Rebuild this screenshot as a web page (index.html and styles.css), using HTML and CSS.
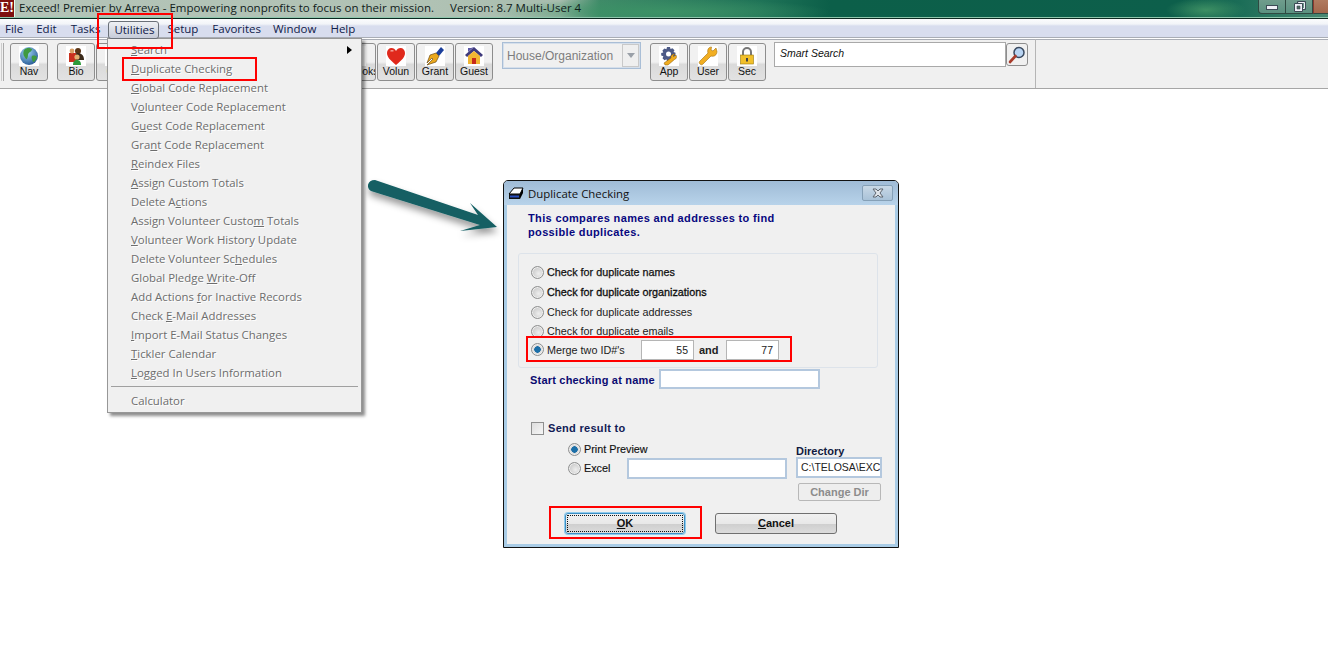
FILE: index.html
```html
<!DOCTYPE html>
<html lang="en">
<head>
<meta charset="utf-8">
<title>Exceed! Premier</title>
<link rel="stylesheet" href="styles.css">
</head>
<body>
<div class="app">
  <header class="titlebar">
    <span class="logo">E!</span>
    <span class="apptitle">Exceed! Premier by Arreva - Empowering nonprofits to focus on their mission.</span>
    <span class="appversion">Version: 8.7 Multi-User 4</span>
    <div class="winbtns">
      <span class="winbtn"><i class="min-glyph"></i></span>
      <span class="winbtn"><svg viewBox="0 0 13 12" width="13" height="12"><path d="M4.500 .5h8v8h-8z" fill="none" stroke="#3c4a55"/><path d="M5.500 1.500h6v6h-6z" fill="none" stroke="#eef0f6"/><path d="M1.500 2.500h8v8h-8z" fill="#eef0f6" stroke="#3c4a55"/><path d="M4 5h3v3H4z" fill="#4d6a60" stroke="#3c4a55" stroke-width=".6"/></svg></span>
      <span class="winbtn close"></span>
    </div>
  </header>
  <nav class="menubar">
    <span class="mi">File</span>
    <span class="mi m-edit">Edit</span>
    <span class="mi m-tasks">Tasks</span>
    <span class="mi active">Utilities</span>
    <span class="mi m-setup">Setup</span>
    <span class="mi m-fav">Favorites</span>
    <span class="mi m-win">Window</span>
    <span class="mi">Help</span>
  </nav>
  <div class="toolbar">
    <div class="tb-inner">
      <div class="grip"></div>
      <button class="tool nav"><svg viewBox="0 0 20 20" class="ic"><defs><radialGradient id="g1" cx=".4" cy=".3" r=".8"><stop offset="0" stop-color="#9fd6f5"/><stop offset="1" stop-color="#1d4f8e"/></radialGradient></defs><circle cx="10" cy="10" r="9" fill="url(#g1)"/><path d="M5 4c3-3 6-2 8-1 0 3-4 3-4 6 0 2-1 5-2 4-1-2-4-4-2-9zM13 10c2-1 4 0 5 1-1 4-3 5-4 5-1-2-2-5-1-6z" fill="#3f9a3f"/></svg><span>Nav</span></button>
      <button class="tool bio"><svg viewBox="0 0 20 20" class="ic"><circle cx="12" cy="5" r="3" fill="#5b3415"/><path d="M8 14c0-5 1-7 4-7s6 2 6 7z" fill="#3b2a1a"/><rect x="3" y="7" width="7" height="9" fill="#c9301e"/><circle cx="6" cy="5" r="2.400" fill="#d9a066"/><circle cx="11" cy="11" r="2.600" fill="#e2b070"/><path d="M7 19c0-4 2-5 4-5s4 1 4 5z" fill="#2d9a3a"/></svg><span>Bio</span></button>
      <button class="tool gift"><svg viewBox="0 0 20 20" class="ic"><rect x="2" y="4" width="16" height="14" fill="#c9a15b"/></svg><span class="gift-l">Gift</span></button>
      <button class="tool books"><svg viewBox="0 0 20 20" class="ic"><rect x="2" y="2" width="14" height="16" fill="#1f7a3a"/><rect x="5" y="5" width="8" height="2" fill="#dfe"/></svg><span>Books</span></button>
      <button class="tool"><svg viewBox="0 0 20 20" class="ic"><path d="M10 19C4 14 1 11 1 7c0-3 2-5 4.500-5C7.500 2 9 3 10 5c1-2 2.500-3 4.500-3C17 2 19 4 19 7c0 4-3 7-9 12z" fill="#e0291c"/><path d="M4 5c1-1.500 3-1.500 4 0-1 .5-3 1-4 0z" fill="#f8a79c"/></svg><span>Volun</span></button>
      <button class="tool"><svg viewBox="0 0 20 20" class="ic"><path d="M11 7l5-6 3 3-5 6z" fill="#1b3f9b"/><path d="M11 7l3 3-3 6-9 3 6-6-1-1-5 5 3-8z" fill="#e9a81f" stroke="#5a3b08" stroke-width=".6"/></svg><span>Grant</span></button>
      <button class="tool"><svg viewBox="0 0 20 20" class="ic"><path d="M10 1L1 9l2 2 7-6 7 6 2-2z" fill="#3f3a7c"/><path d="M4 10l6-5 6 5v8H4z" fill="#f2b632"/><rect x="8" y="12" width="4" height="6" fill="#c72a1a"/><path d="M10 1L4 6V2h3z" fill="#5b57a6"/></svg><span>Guest</span></button>
      <div class="combo"><span class="combo-text">House/Organization</span><span class="combo-btn"><i></i></span></div>
      <button class="tool"><svg viewBox="0 0 20 20" class="ic"><path d="M8 1h3l.5 2 2-.8 2 2-1 1.800 2 .7v3l-2 .5.800 2-2 2-2-1-.7 2H8l-.5-2-2 1-2-2 .9-2-2.200-.6V7l2.100-.6-.9-2 2-2 2 .9z" fill="#4d5a86"/><circle cx="9.500" cy="8" r="2.500" fill="#fff"/><path d="M17 9c1 2 .5 4-1.500 4.500L9 19H6l-1-2 7-5c-.5-2 1-4 4-4l-2 2 1 1z" fill="#f0ac1e" stroke="#8a5a05" stroke-width=".5"/></svg><span>App</span></button>
      <button class="tool"><svg viewBox="0 0 20 20" class="ic"><path d="M18 2l-3 3-2-1 .5-3C10.500 1 9 4 10 7l-8 8c-1 1-1 2 0 3s2 1 3 0l8-8c3 1 6-1 6-4.500z" fill="#f1ae22" stroke="#a4700c" stroke-width=".6"/></svg><span>User</span></button>
      <button class="tool"><svg viewBox="0 0 20 20" class="ic"><path d="M6 9V6a4 4 0 0 1 8 0v3" fill="none" stroke="#777" stroke-width="2"/><rect x="3.500" y="9" width="13" height="9" fill="#f1c02b" stroke="#9b7a10" stroke-width=".6"/><rect x="9" y="12" width="2" height="3.500" fill="#444"/></svg><span>Sec</span></button>
      <div class="smart"><span>Smart Search</span></div>
      <button class="smart-btn"><svg viewBox="0 0 20 20" width="20" height="20"><circle cx="12" cy="7.500" r="5" fill="#b9d4f2" stroke="#39495f" stroke-width="1.500"/><path d="M8.500 11L3 17" stroke="#a83b2a" stroke-width="2.600" stroke-linecap="round"/></svg></button>
    </div>
  </div>

  <main class="desktop">
    <svg class="arrow" viewBox="0 0 150 75" width="150" height="75">
      <defs><filter id="sh" x="-20%" y="-40%" width="140%" height="190%"><feDropShadow dx="1" dy="5" stdDeviation="3.500" flood-color="#000" flood-opacity=".4"/></filter></defs>
      <path d="M10 5L113 40 105 28 132 52 95 56 115 50 6 16C1 13 2 5 10 5Z" fill="#135f63" filter="url(#sh)"/>
    </svg>

    <section class="dialog">
      <div class="dlg-title">
        <svg class="dlg-icon" viewBox="0 0 16 14" width="16" height="14"><path d="M1 8l5-6h9l-3 6z" fill="#fff" stroke="#000"/><path d="M12 8l3-6v5l-3 6z" fill="#000"/><path d="M1 8h11v5H1z" fill="#111"/><path d="M2 9.500h9v2H2z" fill="#2a4fc0"/></svg>
        <span class="dlg-name">Duplicate Checking</span>
        <span class="dlg-x"><svg viewBox="0 0 12 10" width="12" height="10"><path d="M1 1h3l2 2 2-2h3L8 5l3 4H8L6 7 4 9H1l3-4z" fill="#dfe4ea" stroke="#5f6770" stroke-width="1"/></svg></span>
      </div>
      <div class="dlg-body">
        <p class="intro">This compares names and addresses to find<br>possible duplicates.</p>
        <div class="group">
          <label class="row r1"><i class="radio"></i><b class="heavy">Check for duplicate names</b></label>
          <label class="row r1"><i class="radio"></i><b class="heavier">Check for duplicate organizations</b></label>
          <label class="row r1"><i class="radio"></i><span>Check for duplicate addresses</span></label>
          <label class="row r2"><i class="radio"></i><span>Check for duplicate emails</span></label>
          <div class="row r3"><i class="radio on"></i><span class="merge">Merge two ID#'s</span><span class="field num w53">55</span><b class="and">and</b><span class="field num w53">77</span></div>
        </div>
        <div class="start"><b class="blue spaced">Start checking at name</b><span class="field blueb w161"></span></div>
        <div class="send"><i class="check"></i><b class="blue wide">Send result to</b></div>
        <div class="outrow">
          <div class="outleft">
            <div class="row pp"><i class="radio on"></i><span class="dark">Print Preview</span></div>
            <div class="row ex"><i class="radio"></i><span class="dark">Excel</span><span class="field blueb w160"></span></div>
          </div>
          <div class="outright">
            <b class="dirlabel">Directory</b>
            <span class="field blueb dir">C:\TELOSA\EXC</span>
            <button class="changedir">Chan<u>g</u>e Dir</button>
          </div>
        </div>
        <div class="actions">
          <button class="btn ok"><span class="dots"><u>O</u>K</span></button>
          <button class="btn"><span><u>C</u>ancel</span></button>
        </div>
      </div>
    </section>
  </main>

  <div class="menu">
    <div class="item"><u>S</u>earch<i class="sub"></i></div>
    <div class="item"><u>D</u>uplicate Checking</div>
    <div class="item"><u>G</u>lobal Code Replacement</div>
    <div class="item">V<u>o</u>lunteer Code Replacement</div>
    <div class="item">G<u>u</u>est Code Replacement</div>
    <div class="item">Gra<u>n</u>t Code Replacement</div>
    <div class="item"><u>R</u>eindex Files</div>
    <div class="item"><u>A</u>ssign Custom Totals</div>
    <div class="item">Delete A<u>c</u>tions</div>
    <div class="item">Assign Volunteer Custo<u>m</u> Totals</div>
    <div class="item"><u>V</u>olunteer Work History Update</div>
    <div class="item">Delete Volunteer Sc<u>h</u>edules</div>
    <div class="item">Global Pledge <u>W</u>rite-Off</div>
    <div class="item">Add Actions <u>f</u>or Inactive Records</div>
    <div class="item">Check <u>E</u>-Mail Addresses</div>
    <div class="item"><u>I</u>mport E-Mail Status Changes</div>
    <div class="item"><u>T</u>ickler Calendar</div>
    <div class="item"><u>L</u>ogged In Users Information</div>
    <div class="sep"></div>
    <div class="item">Calculator</div>
  </div>

  <div class="red red-util"></div>
  <div class="red red-dup"></div>
  <div class="red red-merge"></div>
  <div class="red red-ok"></div>
</div>
</body>
</html>
```
FILE: styles.css
```css
* { box-sizing: border-box; }
html, body { margin: 0; padding: 0; height: 100%; background: #fff; overflow: hidden; }
body { font-family: "Open Sans", "Noto Sans", sans-serif; }
.app { position: relative; width: 1328px; height: 660px; overflow: hidden; }

/* Title bar */
.titlebar {
  height: 19px; display: flex; align-items: flex-start; position: relative;
  border-bottom: 1px solid #0d2a22; box-shadow: inset 0 -1px 0 #8fc7ad;
  background:
    radial-gradient(ellipse 40px 12px at 1206px 10px, #3d8f63, transparent),
    radial-gradient(ellipse 170px 14px at 660px 12px, #3c9266, transparent),
    linear-gradient(90deg, #b4c4b8 0, #b0c2b4 430px, #a8bdae 560px, #3f8a68 600px, #1f7357 760px, #0c5f49 830px, #0d5f4b 1180px, #1b6d57 1240px, #4a8a74 1328px);
}
.logo {
  width: 15px; height: 17px; margin-top: 0; background: #7e1010; color: #fff; border-right: 1px solid #dfe;
  font: bold 14px/16px "Liberation Serif", serif; text-align: center; flex: none;
}
.apptitle, .appversion { font: 11.5px/15px "Open Sans", sans-serif; color: #10201a; white-space: nowrap; }
.apptitle { margin-left: 4px; }
.appversion { margin-left: 16px; }
.winbtns { position: absolute; right: 0; top: 0; height: 14px; display: flex; }
.winbtn {
  width: 28px; height: 14px; border: 1px solid #2f4a42; border-top: 0; display: flex; align-items: center; justify-content: center;
  background: linear-gradient(#6f9c8c, #5b9180);
}
.winbtn:first-child { border-radius: 0 0 0 4px; }
.winbtn + .winbtn { border-left: 0; margin-left: 0; width: 27px; }
.winbtn.close { width: 15px; background: linear-gradient(#b07a5f, #a3674c); border-right: 0; border-left: 1px solid #8a3a30; }
.min-glyph { width: 12px; height: 5px; background: #eef0f6; border: 1px solid #3c4a55; margin-top: 2px; }

/* Menu bar */
.menubar {
  height: 19px; display: flex; align-items: flex-start; padding: 2px 0 0 4px;
  background: linear-gradient(#fbfcfd 0, #f2f4f8 5px, #d8ddee 7px, #d8ddee 100%);
  border-bottom: 1px solid #a9adb5;
}
.mi { font: 11.5px/16px "Open Sans", sans-serif; color: #10204a; margin-right: 11px; padding: 0 1px; white-space: nowrap; }
.mi.m-edit { margin-right: 12px; }
.mi.m-tasks { margin-right: 7px; }
.mi.m-setup { margin-right: 12px; }
.mi.m-fav { margin-right: 10px; }
.mi.m-win { margin-right: 12px; }
.mi.active {
  border: 1px solid #6a7078; border-radius: 3px; padding: 0 5px; height: 18px; width: 51px; margin: 0 7px 0 0;
  background: linear-gradient(#eef0f4, #c6cbd8); position: relative; z-index: 2;
}

/* Toolbar */
.toolbar {
  height: 51px; background: #f0f0f0; border-top: 1px solid #fff; border-bottom: 1px solid #a6a6a6;
  box-shadow: inset 0 1px 0 #a9adb5;
}
.tb-inner { height: 49px; width: 1036px; border-right: 1px solid #b5b5b5; display: flex; align-items: flex-start; padding-top: 4px; position: relative; }
.grip { width: 3px; height: 38px; margin-left: 1px; border-left: 1px solid #ccc; border-right: 1px solid #aaa; margin-right: 6px; }
.tool {
  width: 38px; height: 38px; padding: 2px 0 0; margin: 0 1px 0 0; flex: none; border: 1px solid #8d8d8d; border-radius: 3px;
  background: linear-gradient(#f1f1f1 0, #f1f1f1 50%, #dadada 57%, #e2e2e2 100%);
  display: flex; flex-direction: column; align-items: center; justify-content: flex-start;
  font: 10.5px/12px "Liberation Sans", sans-serif; color: #111;
  overflow: hidden;
}
.tool span { margin-top: -1px; }
.ic { width: 20px; height: 20px; display: block; flex: none; background: #fff; }
.nav { margin-right: 9px; }
.gift { margin-right: 0; }
.gift-l { color: #c9821b; }
.books { margin-left: 208px; width: 34px; }
.books .ic { margin-right: 6px; }
.books span { margin-left: 10px; white-space: nowrap; }
.combo {
  width: 139px; height: 27px; margin: -1px 9px 0 8px; border: 1px solid #a9bed6; outline: 1px solid #d5dfeb; outline-offset: -2px;
  background: #f0f0f0; display: flex; align-items: center; justify-content: space-between; padding: 1px;
}
.combo-text { font: 12px/16px "Liberation Sans", sans-serif; color: #7d7d7d; padding-left: 3px; white-space: nowrap; }
.combo-btn { width: 17px; height: 23px; border: 1px solid #c9c9c9; display: flex; align-items: center; justify-content: center; background: #efefef; }
.combo-btn i { width: 0; height: 0; border: 4px solid transparent; border-top: 5px solid #9aa0a8; border-bottom: 0; }
.smart {
  width: 232px; height: 25px; margin: -1px 0 0 7px; border: 1px solid #a9a9a9; background: #fff; padding: 3px 5px;
  font: italic 10.5px/14px "Liberation Sans", sans-serif; color: #111;
}
.smart-btn { width: 22px; height: 23px; margin-top: 0; padding: 0; border: 1px solid #8d8d8d; border-radius: 3px; background: #f0f0f0; display: flex; align-items: center; justify-content: center; }

/* Desktop */
.desktop { position: relative; height: 571px; }
.arrow { position: absolute; left: 365px; top: 86px; }

/* Dialog */
.dialog {
  position: absolute; left: 503px; top: 91px; width: 396px; height: 368px;
  border: 1px solid #111; border-radius: 5px 5px 0 0; background: #f0f0f0; box-shadow: inset 0 0 0 3px #a9cce6;
  display: flex; flex-direction: column; overflow: hidden;
}
.dlg-title {
  height: 24px; flex: none; display: flex; align-items: center; padding: 0 4px;
  background: linear-gradient(#9fbbd6, #b8d3ea);
}
.dlg-icon { flex: none; }
.dlg-name { font: 11.4px/16px "Open Sans", sans-serif; color: #111; margin: 1px 0 0 4px; flex: 1; }
.dlg-x { width: 31px; height: 16px; margin-right: 1px; margin-top: -1px; border: 1px solid #85a0b7; border-radius: 2px; background: linear-gradient(#c8d8e6,#a9c2d8); display: flex; align-items: center; justify-content: center; }
.dlg-body { flex: 1; margin: 0 3px 3px; background: #f0f0f0; position: relative; padding: 0 0 0 11px; }
.intro { margin: 6px 0 14px 10px; font: bold 11px/14px "Liberation Sans", sans-serif; color: #07077f; letter-spacing: .35px; }
.group { width: 360px; height: 115px; margin-left: 0; border: 1px solid #dde3ea; border-radius: 3px; padding: 8px 0 0 12px; display: flex; flex-direction: column; }
.row { display: flex; align-items: center; font: 10.8px/14px "Liberation Sans", sans-serif; color: #222; white-space: nowrap; }
.r1 { height: 20px; }
.r2 { height: 18px; }
.r3 { height: 21px; margin-top: -1px; }
.row b { font-weight: normal; }
.heavy { -webkit-text-stroke: .25px #000; }
.heavier { -webkit-text-stroke: .3px #000; }
.radio {
  width: 13px; height: 13px; border-radius: 50%; border: 1px solid #8e8f8f; flex: none; margin-right: 3px;
  background: radial-gradient(circle at 60% 60%, #eee 0, #c8c8c8 75%);
  box-shadow: inset 0 0 0 1px #eee;
}
.radio.on { background: radial-gradient(circle, #1c6fa8 0, #1c6fa8 3px, #dcdcdc 3.500px); }
.merge { width: 94px; }
.field { display: block; background: #fff; border: 1px solid #b5b5b5; height: 20px; font: 10.5px/19px "Liberation Sans", sans-serif; color: #222; padding: 0 5px 0 3px; flex: none; }
.num { text-align: right; }
.w53 { width: 53px; }
.row .and { width: 32px; padding-left: 5px; font: bold 11px/14px "Liberation Sans", sans-serif; }
.blue { font: bold 11px/14px "Liberation Sans", sans-serif; color: #0a0a70; }
.spaced { letter-spacing: .2px; margin-top: 2px; }
.wide { letter-spacing: .3px; }
.blueb { border: 2px solid #b4c8de; }
.w161 { width: 161px; height: 20px; margin-left: 4px; }
.w160 { width: 160px; height: 21px; margin-left: 17px; }
.start { display: flex; align-items: center; margin: 1px 0 0 12px; height: 20px; }
.send { display: flex; align-items: center; margin: 32px 0 0 13px; height: 14px; }
.check { width: 13px; height: 13px; border: 1px solid #8e8f8f; background: linear-gradient(135deg, #ddd, #f6f6f6); margin-right: 4px; flex: none; }
.send .blue { color: #111a55; }
.outrow { display: flex; margin-top: 8px; }
.outleft { width: 278px; padding-left: 50px; margin-top: -3px; display: flex; flex-direction: column; }
.pp { height: 18px; }
.ex { height: 20px; }
.dark { color: #111; -webkit-text-stroke: .15px #111; }
.outright { display: flex; flex-direction: column; width: 90px; }
.dirlabel { font: bold 11px/12px "Liberation Sans", sans-serif; color: #111a40; height: 14px; padding-top: 2px; }
.dir { width: 86px; height: 21px; font-size: 10.5px; padding: 0 2px 0 3px; white-space: nowrap; overflow: hidden; line-height: 17px; }
.changedir { width: 83px; height: 18px; margin: 5px 0 0 2px; padding: 0; border: 1px solid #b8b8b8; border-radius: 2px; background: #eee; font: bold 11px/14px "Liberation Sans", sans-serif; color: #8c8c8c; }
.actions { display: flex; gap: 30px; margin: 12px 0 0 47px; }
.btn { width: 122px; height: 21px; padding: 2px; border: 1px solid #707070; border-radius: 3px; background: linear-gradient(#f1f1f1 0, #e8e8e8 50%, #cfcfcf 55%, #dcdcdc 100%); font: bold 11px/14px "Liberation Sans", sans-serif; color: #111; }
.btn span { display: block; height: 15px; }
.btn.ok { width: 120px; border-color: #3c8fc4; box-shadow: 0 0 0 1px #8fcaec; }
.dots { outline: 1px dotted #111; }

/* Menu */
.menu {
  position: absolute; left: 107px; top: 38px; width: 255px; height: 375px; background: #f0f0f0;
  border: 1px solid #979797; box-shadow: 3px 3px 3px rgba(0,0,0,.45); padding: 1px 0 0;
}
.item { height: 19px; padding-left: 23px; font: 11.4px/19px "Open Sans", sans-serif; color: #6d6d6d; text-shadow: 1px 1px 0 #fff; position: relative; white-space: nowrap; }
.sub { position: absolute; right: 9px; top: 6px; width: 0; height: 0; border: 4px solid transparent; border-left: 5px solid #000; border-right: 0; }
.sep { height: 1px; background: #a0a0a0; margin: 4px 3px 4px 3px; }

/* Annotations */
.red { position: absolute; border: 2px solid #f00; pointer-events: none; }
.red-util { left: 97px; top: 13px; width: 76px; height: 36px; }
.red-dup { left: 122px; top: 57px; width: 135px; height: 24px; }
.red-merge { left: 526px; top: 336px; width: 266px; height: 26px; }
.red-ok { left: 549px; top: 506px; width: 153px; height: 33px; }
```
